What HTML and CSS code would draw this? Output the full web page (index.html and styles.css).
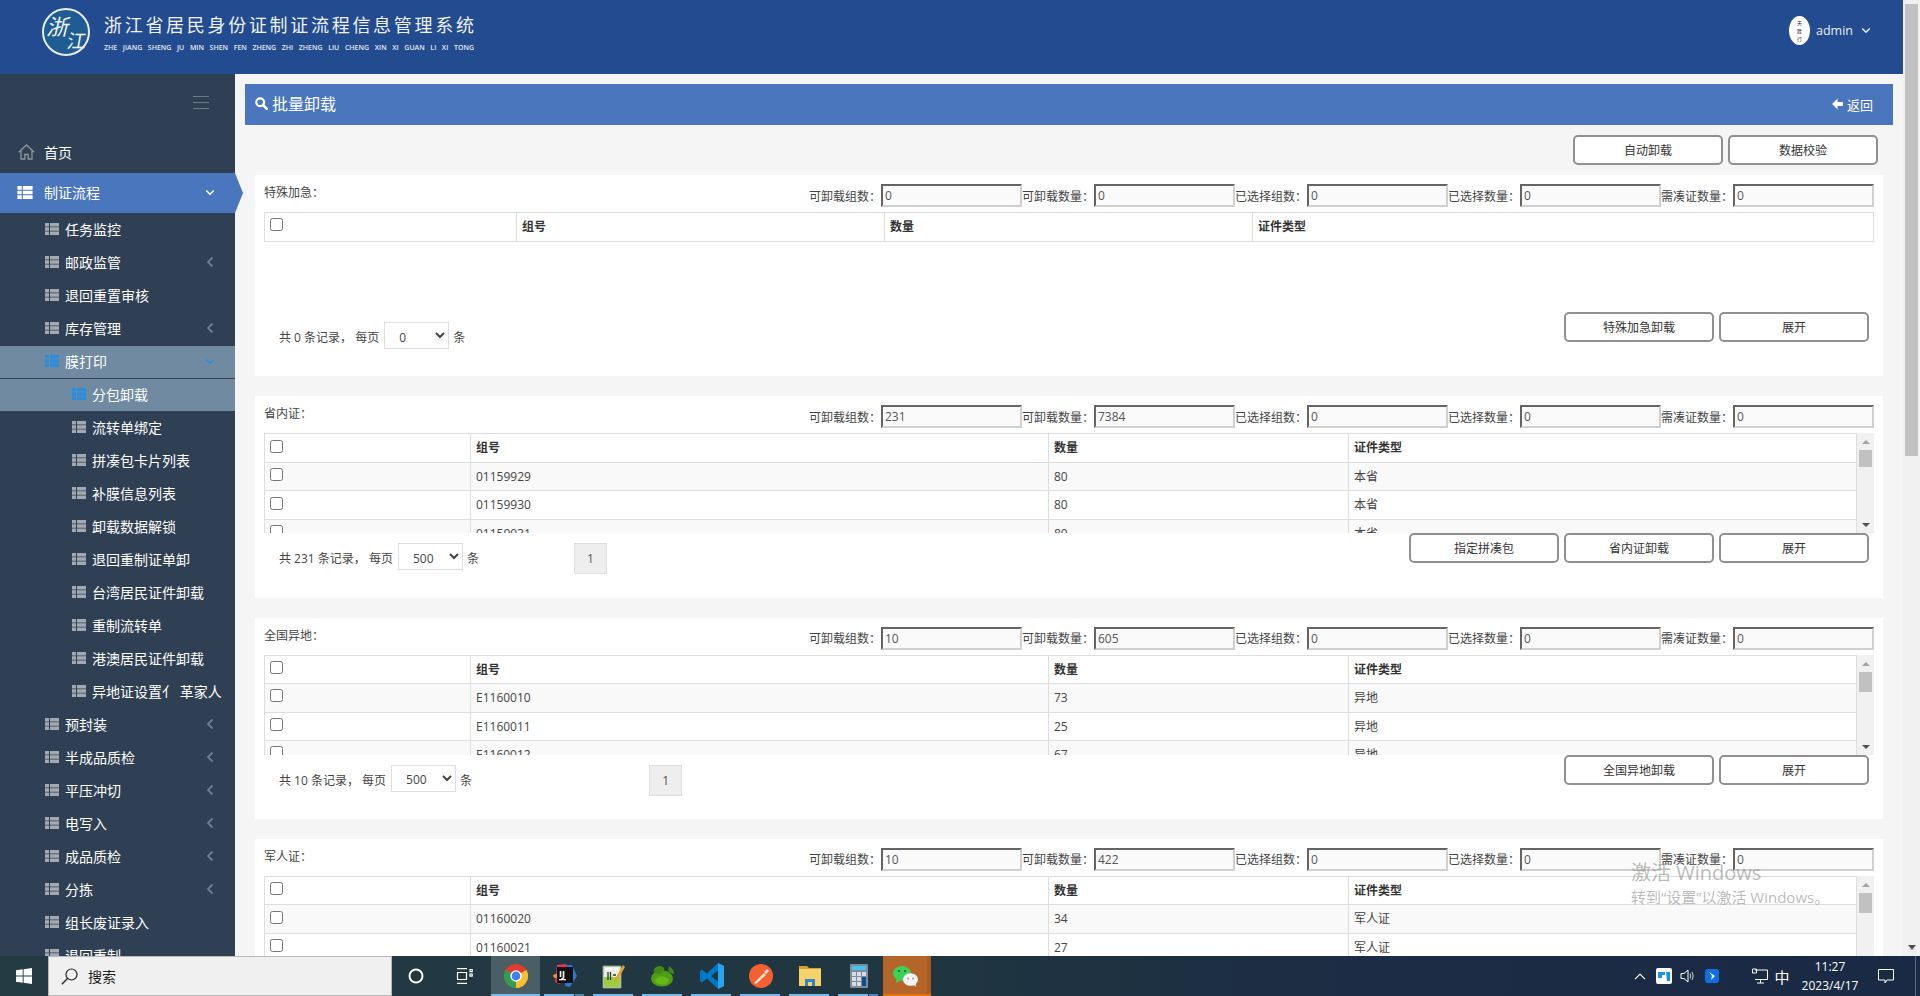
FILE: index.html
```html
<!DOCTYPE html>
<html lang="zh-CN">
<head>
<meta charset="utf-8">
<title>批量卸载</title>
<link rel="stylesheet" href="styles.css">
</head>
<body>
<svg class="defs" width="0" height="0" aria-hidden="true">
  <symbol id="i-list" viewBox="0 0 14 12"><path d="M0 0h4v3.4H0zM5 0h9v3.4H5zM0 4.3h4v3.4H0zM5 4.3h9v3.4H5zM0 8.6h4V12H0zM5 8.6h9V12H5z" fill="currentColor"/></symbol>
  <symbol id="i-left" viewBox="0 0 8 12"><path d="M6.5 1.5 2 6l4.500 4.500" fill="none" stroke="currentColor" stroke-width="1.800"/></symbol>
  <symbol id="i-down" viewBox="0 0 12 8"><path d="M1.500 1.500 6 6l4.500-4.500" fill="none" stroke="currentColor" stroke-width="1.800"/></symbol>
</svg>

<div class="window">
  <div class="page">
    <header class="topbar">
      <div class="brand">
        <svg class="logo" viewBox="0 0 48 48" width="48" height="48">
          <circle cx="24" cy="24" r="23" fill="#1f5c94" stroke="#e6edf4" stroke-width="2"/>
          <text class="logo-a" transform="translate(4 27) skewX(-14)">浙</text>
          <text class="logo-b" transform="translate(24 40) skewX(-10)">江</text>
        </svg>
        <div class="brand-text">
          <div class="brand-cn">浙江省居民身份证制证流程信息管理系统</div>
          <div class="brand-en">ZHE JIANG SHENG JU MIN SHEN FEN ZHENG ZHI ZHENG LIU CHENG XIN XI GUAN LI XI TONG</div>
        </div>
      </div>
      <div class="user">
        <div class="avatar"><span>天</span><span>胜</span><span>行</span></div>
        <span class="user-name">admin</span>
        <svg class="user-caret" width="10" height="7"><use href="#i-down"/></svg>
      </div>
    </header>

    <div class="body-row">
      <aside class="sidebar">
        <div class="toggle"><span></span><span></span><span></span></div>
        <a class="nav-home">
          <svg class="home-icon" viewBox="0 0 17 16" width="17" height="16"><path d="M.8 8.200 8.500 1l7.700 7.200M3 6.500V15h3.800v-4.500h3.400V15H14V6.500" fill="none" stroke="#8e959e" stroke-width="1.300"/></svg>
          <span>首页</span>
        </a>
        <a class="nav-open">
          <svg class="icon-lg" width="16" height="13"><use href="#i-list"/></svg>
          <span>制证流程</span>
          <svg class="caret caret-down" width="10" height="7"><use href="#i-down"/></svg>
        </a>
        <a class="nav-row"><svg class="icon" width="14" height="12"><use href="#i-list"/></svg><span>任务监控</span></a>
        <a class="nav-row"><svg class="icon" width="14" height="12"><use href="#i-list"/></svg><span>邮政监管</span><svg class="caret" width="8" height="12"><use href="#i-left"/></svg></a>
        <a class="nav-row"><svg class="icon" width="14" height="12"><use href="#i-list"/></svg><span>退回重置审核</span></a>
        <a class="nav-row"><svg class="icon" width="14" height="12"><use href="#i-list"/></svg><span>库存管理</span><svg class="caret" width="8" height="12"><use href="#i-left"/></svg></a>
        <a class="nav-row is-current"><svg class="icon" width="14" height="12"><use href="#i-list"/></svg><span>膜打印</span><svg class="caret caret-down" width="10" height="7"><use href="#i-down"/></svg></a>
        <a class="nav-row sub is-current"><svg class="icon" width="14" height="12"><use href="#i-list"/></svg><span>分包卸载</span></a>
        <a class="nav-row sub"><svg class="icon" width="14" height="12"><use href="#i-list"/></svg><span>流转单绑定</span></a>
        <a class="nav-row sub"><svg class="icon" width="14" height="12"><use href="#i-list"/></svg><span>拼凑包卡片列表</span></a>
        <a class="nav-row sub"><svg class="icon" width="14" height="12"><use href="#i-list"/></svg><span>补膜信息列表</span></a>
        <a class="nav-row sub"><svg class="icon" width="14" height="12"><use href="#i-list"/></svg><span>卸载数据解锁</span></a>
        <a class="nav-row sub"><svg class="icon" width="14" height="12"><use href="#i-list"/></svg><span>退回重制证单卸</span></a>
        <a class="nav-row sub"><svg class="icon" width="14" height="12"><use href="#i-list"/></svg><span>台湾居民证件卸载</span></a>
        <a class="nav-row sub"><svg class="icon" width="14" height="12"><use href="#i-list"/></svg><span>重制流转单</span></a>
        <a class="nav-row sub"><svg class="icon" width="14" height="12"><use href="#i-list"/></svg><span>港澳居民证件卸载</span></a>
        <a class="nav-row sub"><svg class="icon" width="14" height="12"><use href="#i-list"/></svg><span>异地证设置亻 革家人</span></a>
        <a class="nav-row"><svg class="icon" width="14" height="12"><use href="#i-list"/></svg><span>预封装</span><svg class="caret" width="8" height="12"><use href="#i-left"/></svg></a>
        <a class="nav-row"><svg class="icon" width="14" height="12"><use href="#i-list"/></svg><span>半成品质检</span><svg class="caret" width="8" height="12"><use href="#i-left"/></svg></a>
        <a class="nav-row"><svg class="icon" width="14" height="12"><use href="#i-list"/></svg><span>平压冲切</span><svg class="caret" width="8" height="12"><use href="#i-left"/></svg></a>
        <a class="nav-row"><svg class="icon" width="14" height="12"><use href="#i-list"/></svg><span>电写入</span><svg class="caret" width="8" height="12"><use href="#i-left"/></svg></a>
        <a class="nav-row"><svg class="icon" width="14" height="12"><use href="#i-list"/></svg><span>成品质检</span><svg class="caret" width="8" height="12"><use href="#i-left"/></svg></a>
        <a class="nav-row"><svg class="icon" width="14" height="12"><use href="#i-list"/></svg><span>分拣</span><svg class="caret" width="8" height="12"><use href="#i-left"/></svg></a>
        <a class="nav-row"><svg class="icon" width="14" height="12"><use href="#i-list"/></svg><span>组长废证录入</span></a>
        <a class="nav-row"><svg class="icon" width="14" height="12"><use href="#i-list"/></svg><span>退回重制</span></a>
      </aside>

      <main class="main">
        <div class="titlebar">
          <div class="title">
            <svg width="13" height="13" viewBox="0 0 13 13"><circle cx="5.200" cy="5.200" r="3.900" fill="none" stroke="#fff" stroke-width="2.200"/><path d="m8 8 3.800 3.800" stroke="#fff" stroke-width="2.600" stroke-linecap="round"/></svg>
            <span>批量卸载</span>
          </div>
          <a class="back">
            <svg width="13" height="12" viewBox="0 0 12 12"><path d="M6 .6 .6 6 6 11.400V8h5.400V4H6z" fill="#fff"/></svg>
            <span>返回</span>
          </a>
        </div>

        <div class="toolbar">
          <button class="btn">自动卸载</button>
          <button class="btn">数据校验</button>
        </div>

        <section class="panel">
          <div class="panel-head">
            <div class="panel-label">特殊加急：</div>
            <div class="fields">
              <label class="field"><span>可卸载组数：</span><input readonly value="0"></label>
              <label class="field"><span>可卸载数量：</span><input readonly value="0"></label>
              <label class="field"><span>已选择组数：</span><input readonly value="0"></label>
              <label class="field"><span>已选择数量：</span><input readonly value="0"></label>
              <label class="field"><span>需凑证数量：</span><input readonly value="0"></label>
            </div>
          </div>
          <div class="grid-wrap">
            <div class="grid-body">
              <table class="grid grid-wide">
                <tr><th><input type="checkbox"></th><th>组号</th><th>数量</th><th>证件类型</th></tr>
              </table>
            </div>
          </div>
          <div class="panel-foot">
            <div class="pager">
              <span>共 0 条记录， 每页</span>
              <select><option>0</option></select>
              <span>条</span>
            </div>
            <div class="actions">
              <button class="btn">特殊加急卸载</button>
              <button class="btn">展开</button>
            </div>
          </div>
        </section>

        <section class="panel">
          <div class="panel-head">
            <div class="panel-label">省内证：</div>
            <div class="fields">
              <label class="field"><span>可卸载组数：</span><input readonly value="231"></label>
              <label class="field"><span>可卸载数量：</span><input readonly value="7384"></label>
              <label class="field"><span>已选择组数：</span><input readonly value="0"></label>
              <label class="field"><span>已选择数量：</span><input readonly value="0"></label>
              <label class="field"><span>需凑证数量：</span><input readonly value="0"></label>
            </div>
          </div>
          <div class="grid-wrap">
            <div class="grid-body">
              <table class="grid">
                <tr><th><input type="checkbox"></th><th>组号</th><th>数量</th><th>证件类型</th></tr>
                <tr><td><input type="checkbox"></td><td>01159929</td><td>80</td><td>本省</td></tr>
                <tr><td><input type="checkbox"></td><td>01159930</td><td>80</td><td>本省</td></tr>
                <tr><td><input type="checkbox"></td><td>01159931</td><td>80</td><td>本省</td></tr>
              </table>
            </div>
            <div class="vscroll"><i class="arrow-up"></i><b class="thumb"></b><i class="arrow-down"></i></div>
          </div>
          <div class="panel-foot">
            <div class="pager">
              <span>共 231 条记录， 每页</span>
              <select><option>500</option></select>
              <span>条</span>
              <a class="page-no page-no-a">1</a>
            </div>
            <div class="actions">
              <button class="btn">指定拼凑包</button>
              <button class="btn">省内证卸载</button>
              <button class="btn">展开</button>
            </div>
          </div>
        </section>

        <section class="panel">
          <div class="panel-head">
            <div class="panel-label">全国异地：</div>
            <div class="fields">
              <label class="field"><span>可卸载组数：</span><input readonly value="10"></label>
              <label class="field"><span>可卸载数量：</span><input readonly value="605"></label>
              <label class="field"><span>已选择组数：</span><input readonly value="0"></label>
              <label class="field"><span>已选择数量：</span><input readonly value="0"></label>
              <label class="field"><span>需凑证数量：</span><input readonly value="0"></label>
            </div>
          </div>
          <div class="grid-wrap">
            <div class="grid-body">
              <table class="grid">
                <tr><th><input type="checkbox"></th><th>组号</th><th>数量</th><th>证件类型</th></tr>
                <tr><td><input type="checkbox"></td><td>E1160010</td><td>73</td><td>异地</td></tr>
                <tr><td><input type="checkbox"></td><td>E1160011</td><td>25</td><td>异地</td></tr>
                <tr><td><input type="checkbox"></td><td>E1160012</td><td>67</td><td>异地</td></tr>
              </table>
            </div>
            <div class="vscroll"><i class="arrow-up"></i><b class="thumb thumb-lg"></b><i class="arrow-down"></i></div>
          </div>
          <div class="panel-foot">
            <div class="pager">
              <span>共 10 条记录， 每页</span>
              <select><option>500</option></select>
              <span>条</span>
              <a class="page-no page-no-b">1</a>
            </div>
            <div class="actions">
              <button class="btn">全国异地卸载</button>
              <button class="btn">展开</button>
            </div>
          </div>
        </section>

        <section class="panel">
          <div class="panel-head">
            <div class="panel-label">军人证：</div>
            <div class="fields">
              <label class="field"><span>可卸载组数：</span><input readonly value="10"></label>
              <label class="field"><span>可卸载数量：</span><input readonly value="422"></label>
              <label class="field"><span>已选择组数：</span><input readonly value="0"></label>
              <label class="field"><span>已选择数量：</span><input readonly value="0"></label>
              <label class="field"><span>需凑证数量：</span><input readonly value="0"></label>
            </div>
          </div>
          <div class="grid-wrap">
            <div class="grid-body">
              <table class="grid">
                <tr><th><input type="checkbox"></th><th>组号</th><th>数量</th><th>证件类型</th></tr>
                <tr><td><input type="checkbox"></td><td>01160020</td><td>34</td><td>军人证</td></tr>
                <tr><td><input type="checkbox"></td><td>01160021</td><td>27</td><td>军人证</td></tr>
              </table>
            </div>
            <div class="vscroll"><i class="arrow-up"></i><b class="thumb thumb-lg"></b><i class="arrow-down"></i></div>
          </div>
        </section>
      </main>
    </div>
  </div>

  <div class="page-scroll"><b></b><i></i></div>

  <div class="watermark">
    <div class="wm-a">激活 Windows</div>
    <div class="wm-b">转到“设置”以激活 Windows。</div>
  </div>
</div>

<footer class="taskbar">
  <div class="start">
    <svg width="16" height="16" viewBox="0 0 16 16"><path d="M0 2.300 6.700 1.300V7.500H0zM7.600 1.200 16 0v7.500H7.600zM0 8.400h6.700v6.300L0 13.700zM7.600 8.400H16V16l-8.400-1.200z" fill="#fff"/></svg>
  </div>
  <div class="search">
    <svg width="17" height="17" viewBox="0 0 17 17"><circle cx="10.500" cy="6.500" r="5.500" fill="none" stroke="#222" stroke-width="1.200"/><path d="M6.500 10.500 .8 16.200" stroke="#222" stroke-width="1.300"/></svg>
    <span>搜索</span>
  </div>
  <div class="tb-sys">
    <svg width="16" height="16" viewBox="0 0 16 16"><circle cx="8" cy="8" r="6.500" fill="none" stroke="#fff" stroke-width="2"/></svg>
  </div>
  <div class="tb-sys">
    <svg width="17" height="16" viewBox="0 0 17 16"><path d="M1 .7h10M1 15.300h10M1.500 4.500h9v7h-9zM14 1.500h2.200v2.200H14zM14 6h2.200v2.200H14z" fill="none" stroke="#fff" stroke-width="1.200"/></svg>
  </div>
  <div class="tb-apps">
    <div class="tile tile-active">
      <svg width="24" height="24" viewBox="0 0 24 24"><circle cx="12" cy="12" r="12" fill="#e33b2e"/><path d="M12 12 22.400 6A12 12 0 0 1 12 24z" fill="#fbc02d"/><path d="M12 12 12 24A12 12 0 0 1 1.600 6z" fill="#2e9e4f"/><circle cx="12" cy="12" r="5.700" fill="#fff"/><circle cx="12" cy="12" r="4.400" fill="#3f80ec"/></svg>
    </div>
    <div class="tile tile-multi">
      <svg width="24" height="24" viewBox="0 0 24 24"><path d="M4 1 13 0l4 8-11 12-4-2z" fill="#e8315f"/><path d="M14 1 19 1l5 11-7 11-5-1z" fill="#2977d9"/><path d="M0 11 5 9v5H1z" fill="#f08c2a"/><rect x="4" y="3" width="16" height="16" fill="#111"/><text class="idea-t" x="6" y="12.500">IJ</text><rect x="6" y="15" width="7" height="1.300" fill="#fff"/></svg>
    </div>
    <div class="tile">
      <svg width="23" height="25" viewBox="0 0 23 25"><path d="M1 2h18v22H1z" fill="#e8eee0" stroke="#7f8f78"/><path d="M2 13h16v10H2z" fill="#9ccf3e"/><path d="M3 4h13v2H3z" fill="#fff"/><path d="M6 8v8M8.500 8v8M11 11h3" stroke="#2b3a22" stroke-width="1.300"/><path d="M21 1 13 15l-1 4 3-2 8-14z" fill="#e8a02a"/></svg>
    </div>
    <div class="tile">
      <svg width="24" height="22" viewBox="0 0 24 22"><ellipse cx="11" cy="13.500" rx="11" ry="8" fill="#4f9e13"/><ellipse cx="8" cy="5" rx="5.500" ry="3.800" fill="#3f8a10" transform="rotate(-15 8 5)"/><path d="M18 1q5 3 5 8-3 0-6-3z" fill="#3f8a10"/><ellipse cx="11" cy="15.500" rx="7" ry="4" fill="#66b818"/></svg>
    </div>
    <div class="tile">
      <svg width="24" height="26" viewBox="0 0 24 26"><path d="M18 0 24 3v20l-6 3L7 15.500 2 19.500 0 18V8l2-1.500 5 4z" fill="#0078c8"/><path d="M18 0 24 3v20l-6 3z" fill="#2aa3ef"/><path d="M18 7.500 11 13l7 5.500z" fill="#1f3540"/></svg>
    </div>
    <div class="tile">
      <svg width="24" height="24" viewBox="0 0 24 24"><circle cx="12" cy="12" r="12" fill="#f4602f"/><path d="M5 19 15 9l2 2L7 20zM15 8l3-3 2 2-3 3z" fill="#ffe6dc"/></svg>
    </div>
    <div class="tile">
      <svg width="22" height="20" viewBox="0 0 22 20"><path d="M0 0h8l2 2h12v18H0z" fill="#d9a02c"/><path d="M0 3h22v17H0z" fill="#f6d36a"/><path d="M6 20v-7h10v7h-3v-4H9v4z" fill="#2a86d0"/></svg>
    </div>
    <div class="tile tile-multi">
      <svg width="18" height="24" viewBox="0 0 18 24"><rect width="18" height="24" rx="1" fill="#7d8c98"/><rect x="2" y="2" width="14" height="4" fill="#49c1f0"/><path d="M2 8h4v4H2zM7 8h4v4H7zM12 8h4v4h-4zM2 13h4v4H2zM7 13h4v4H7zM2 18h4v4H2zM7 18h4v4H7z" fill="#d6dde2"/><rect x="12" y="13" width="4" height="9" fill="#0f4e8e"/></svg>
    </div>
    <div class="tile tile-wechat">
      <svg width="25" height="21" viewBox="0 0 25 21"><ellipse cx="9" cy="7.500" rx="9" ry="7.500" fill="#3fd05a"/><path d="M4 12 3 17l5-3z" fill="#3fd05a"/><ellipse cx="17.500" cy="13.500" rx="7.500" ry="6.300" fill="#f4f4f4"/><path d="M20 18l3 3-.5-5z" fill="#f4f4f4"/><circle cx="6" cy="5" r="1.100" fill="#1d6b22"/><circle cx="12" cy="5" r="1.100" fill="#1d6b22"/><circle cx="15" cy="12.500" r="1" fill="#999"/><circle cx="20" cy="12.500" r="1" fill="#999"/></svg>
    </div>
  </div>
  <div class="tray">
    <div class="tray-item"><svg width="12" height="7" viewBox="0 0 12 7"><path d="M1 6.200 6 1l5 5.200" fill="none" stroke="#fff" stroke-width="1.200"/></svg></div>
    <div class="tray-item"><svg width="16" height="16" viewBox="0 0 16 16"><rect width="16" height="16" rx="2" fill="#fff"/><path d="M2 4h7v3H6v3H2zM10 4h4v9h-3z" fill="#1597e5"/></svg></div>
    <div class="tray-item"><svg width="16" height="14" viewBox="0 0 16 14"><path d="M1 4.500h3L8 1v12L4 9.500H1z" fill="none" stroke="#fff"/><path d="M10 4.500q1.500 2.500 0 5M12 3q2.500 4 0 8" fill="none" stroke="#ccd" /></svg></div>
    <div class="tray-item"><svg width="14" height="14" viewBox="0 0 14 14"><rect width="14" height="14" rx="3" fill="#0d6fe0"/><path d="M4 3l6 4-4 4 1-4z" fill="#fff"/></svg></div>
    <div class="tray-net"><svg width="16" height="16" viewBox="0 0 16 16"><path d="M3 2h12.500v9.500H3M.5 1h4v4h-4zM8.500 11.500V15M5 15h7" fill="none" stroke="#fff"/></svg></div>
    <div class="tray-ime">中</div>
    <div class="clock"><div>11:27</div><div>2023/4/17</div></div>
    <div class="notify"><svg width="16" height="15" viewBox="0 0 16 15"><path d="M.5.500h15v10.500H9L7 14V11H.5z" fill="none" stroke="#fff"/></svg></div>
    <div class="show-desktop"></div>
  </div>
</footer>
</body>
</html>
```

FILE: styles.css
```css
* { box-sizing: border-box; }
html, body { margin: 0; height: 100%; overflow: hidden; }
body {
  display: flex;
  flex-direction: column;
  width: 1920px;
  height: 996px;
  font-family: "Open Sans", "Noto Sans CJK SC", sans-serif;
  font-size: 12px;
  color: #444;
  background: #f5f5f5;
}
.defs { position: absolute; }

.window {
  position: relative;
  display: flex;
  height: 956px;
  overflow: hidden;
}
.page { width: 1903px; display: flex; flex-direction: column; flex: none; }
.page-scroll {
  width: 17px;
  background: #f1f1f1;
  padding: 4px 2px 0;
  display: flex;
  flex-direction: column;
  justify-content: space-between;
  align-items: center;
}
.page-scroll b { display: block; width: 13px; height: 452px; background: #c1c1c1; }
.page-scroll i {
  width: 0; height: 0;
  margin-bottom: 6px;
  border: 4px solid transparent;
  border-top: 5px solid #505050;
  border-bottom: 0;
}

/* header */
.topbar {
  height: 74px;
  flex: none;
  background: #234b8f;
  display: flex;
  align-items: flex-start;
  justify-content: space-between;
}
.brand { display: flex; padding: 8px 0 0 42px; }
.logo { display: block; }
.logo-a, .logo-b { fill: #f0f4f8; font-family: "Noto Sans CJK SC", sans-serif; }
.logo-a { font-size: 22px; }
.logo-b { font-size: 19px; }
.brand-text { margin-left: 14px; width: 370px; }
.brand-cn {
  font-size: 18px;
  line-height: 26px;
  letter-spacing: 2.7px;
  color: #eef2f7;
  margin-top: 4px;
  white-space: nowrap;
}
.brand-en {
  font-size: 7px;
  line-height: 10px;
  margin-top: 5px;
  font-weight: 600;
  color: #e3e9f2;
  white-space: nowrap;
  text-align: justify;
  text-align-last: justify;
}
.user { display: flex; align-items: center; margin: 16px 32px 0 0; color: #e8edf5; }
.avatar {
  width: 21px;
  height: 29px;
  border-radius: 50%;
  background: #fff;
  color: #222;
  font-size: 5px;
  line-height: 8px;
  display: flex;
  flex-direction: column;
  align-items: center;
  justify-content: center;
}
.user-name { font-size: 12.5px; margin-left: 6px; }
.user-caret { margin-left: 8px; color: #e8edf5; }

/* sidebar */
.body-row { flex: 1; display: flex; min-height: 0; }
.sidebar {
  width: 235px;
  flex: none;
  background: #2f4054;
  color: #fff;
  font-size: 14px;
}
.toggle {
  height: 60px;
  padding: 22px 0 0 193px;
}
.toggle span { display: block; width: 16px; height: 1px; margin-bottom: 5px; background: #6b7a8a; }
.nav-home, .nav-open, .nav-row { display: flex; align-items: center; }
.nav-home { height: 39px; padding: 0 0 4px 18px; }
.nav-home span { margin-left: 9px; }
.nav-open {
  position: relative;
  z-index: 1;
  height: 40px;
  margin-bottom: 1px;
  padding: 0 0 2px 17px;
  background: #4a76bd;
}
.nav-open::after {
  content: "";
  position: absolute;
  left: 235px;
  top: 0;
  width: 8px;
  height: 40px;
  background: #4a76bd;
  clip-path: polygon(0 0, 100% 50%, 0 100%);
}
.icon-lg { color: #fff; margin-right: 11px; }
.nav-row { height: 33px; padding: 0 0 4px 45px; }
.nav-row .icon { color: #a4a9b1; margin-right: 6px; flex: none; }
.nav-row.sub { padding-left: 72px; }
.caret { margin-left: auto; margin-right: 21px; color: #6f7f90; }
.caret-down { margin-right: 20px; color: #fff; }
.nav-row.is-current { padding-bottom: 2px; background: #708aa1; border-bottom: 1px solid #2f4054; }
.nav-row.sub.is-current { padding-bottom: 4px; border-bottom: 0; background: linear-gradient(#708aa1 32px, #2f4054 32px); }
.nav-row.is-current .icon, .nav-row.is-current .caret { color: #2a8de0; }
.nav-row span { white-space: nowrap; }

/* main */
.main { flex: 1; min-width: 0; padding: 10px 10px 0; overflow: hidden; }
.titlebar {
  height: 41px;
  background: #4a76bd;
  color: #fff;
  display: flex;
  align-items: center;
  justify-content: space-between;
  padding: 0 20px 0 10px;
}
.title { display: flex; align-items: center; font-size: 16px; padding-bottom: 3px; }
.title span { margin-left: 4px; }
.back { display: flex; align-items: center; font-size: 13px; padding-bottom: 1px; }
.back span { margin-left: 3px; }

.toolbar {
  display: flex;
  justify-content: flex-end;
  gap: 5px;
  padding: 10px 15px 10px 0;
}
.btn {
  width: 150px;
  height: 30px;
  padding: 0;
  border: 2px solid #909090;
  border-radius: 5px;
  background: #fff;
  color: #333;
  font: inherit;
}

.panel {
  height: 201.33px;
  margin: 0 10px 20px;
  padding: 9px 9px 0;
  background: #fff;
}
.panel-head { display: flex; justify-content: space-between; height: 28px; }
.panel-label { line-height: 17px; color: #444; }
.fields { display: flex; }
.field { display: flex; align-items: center; height: 23px; }
.field span { width: 72px; white-space: nowrap; }
.field input {
  width: 141px;
  height: 23px;
  padding: 1px 2px;
  border: 2px inset #c8c8c8;
  border-color: #b8b8b8 #d0d0d0 #d0d0d0 #b8b8b8;
  background: #fafafa;
  color: #555;
  font: inherit;
}

.grid-wrap { display: flex; height: 100px; }
.grid-body { flex: 1; overflow: hidden; min-width: 0; }
.grid {
  width: 100%;
  table-layout: fixed;
  border-collapse: collapse;
}
.grid th, .grid td {
  border: 1px solid #ddd;
  padding: 5px;
  line-height: 17.5px;
  text-align: left;
  vertical-align: middle;
  color: #444;
}
.grid th { font-weight: 700; color: #333; }
.grid tr:nth-child(even) td { background: #f9f9f9; }
.grid th:nth-child(1) { width: 206px; }
.grid th:nth-child(2) { width: 578px; }
.grid th:nth-child(3) { width: 300px; }
.grid-wide th:nth-child(1) { width: 252px; }
.grid-wide th:nth-child(2) { width: 368px; }
.grid-wide th:nth-child(3) { width: 368px; }
.grid input { display: block; margin: 0 0 4px; width: 13px; height: 13px; }

.vscroll {
  width: 17px;
  flex: none;
  background: #f1f1f1;
  display: flex;
  flex-direction: column;
  align-items: center;
  padding: 7px 0 6px;
}
.arrow-up { width: 0; height: 0; border: 4px solid transparent; border-bottom: 4px solid #a3a3a3; border-top: 0; }
.arrow-down { width: 0; height: 0; margin-top: auto; border: 4px solid transparent; border-top: 4px solid #505050; border-bottom: 0; }
.thumb { width: 13px; height: 17px; margin-top: 6px; background: #c1c1c1; }
.thumb-lg { height: 20px; }

.panel-foot { display: flex; justify-content: space-between; padding-right: 5px; }
.pager { display: flex; align-items: flex-start; padding: 10px 0 0 15px; color: #444; }
.pager span { line-height: 27px; padding-top: 2px; white-space: nowrap; }
.pager select {
  width: 65px;
  height: 27px;
  margin: 0 4px 0 5px;
  padding: 3px 0 0 10px;
  border: 1px solid #ddd;
  background: #fff;
  color: #444;
  font: inherit;
}
.page-no {
  width: 33px;
  height: 31px;
  line-height: 29px;
  text-align: center;
  border: 1px solid #ddd;
  background: #eee;
  color: #555;
}
.page-no-a { margin-left: 95px; }
.page-no-b { margin-left: 177px; }
.actions { display: flex; gap: 5px; }

/* activation watermark */
.watermark {
  position: absolute;
  left: 1631px;
  top: 859px;
  color: rgba(140, 140, 140, .6);
  pointer-events: none;
  white-space: nowrap;
}
.wm-a { font-size: 20px; line-height: 28px; }
.wm-b { font-size: 15px; line-height: 20px; }

/* taskbar */
.taskbar {
  height: 40px;
  flex: none;
  display: flex;
  align-items: stretch;
  background: linear-gradient(90deg, #243b44 0, #1f3540 50%, #1c2c44 70%, #1a2a45 100%);
  color: #fff;
}
.start { width: 48px; display: flex; align-items: center; justify-content: center; }
.search {
  width: 344px;
  display: flex;
  align-items: center;
  padding-left: 12px;
  background: #f0f0f0;
  border: 1px solid #b9b9b9;
  color: #222;
  font-size: 14px;
}
.search span { margin-left: 10px; }
.tb-sys { width: 48px; display: flex; align-items: center; justify-content: center; }
.tb-apps { display: flex; margin-left: 3px; }
.tile {
  position: relative;
  width: 49px;
  display: flex;
  align-items: center;
  justify-content: center;
}
.tile::after {
  content: "";
  position: absolute;
  left: 4px;
  right: 5px;
  bottom: 0;
  height: 2px;
  background: #76b9ed;
}
.tile-multi::before {
  content: "";
  position: absolute;
  right: 5px;
  bottom: 0;
  z-index: 1;
  width: 9px;
  height: 2px;
  border-left: 1px solid #1f3540;
  background: #4a86b8;
}
.tile-active { background: #4a5e66; }
.tile-active::after { left: 0; right: 0; }
.tile-wechat { background: #b5652a; width: 48px; border-right: 4px solid #a85c22; }
.tile-wechat::after { left: 0; right: -4px; background: #e8700a; }
.idea-t { font-size: 9px; font-weight: 700; fill: #fff; font-family: "Open Sans", sans-serif; }

.tray { margin-left: auto; display: flex; align-items: center; height: 100%; }
.tray-item { width: 24px; display: flex; justify-content: center; }
.tray-net { width: 24px; margin-left: 24px; display: flex; justify-content: center; }
.tray-ime { width: 20px; text-align: center; font-size: 15px; }
.clock { width: 76px; text-align: center; font-size: 12px; line-height: 19px; }
.notify { width: 35px; display: flex; justify-content: center; }
.show-desktop { width: 5px; height: 100%; margin-left: 12px; border-left: 1px solid #5a6a80; }
```
